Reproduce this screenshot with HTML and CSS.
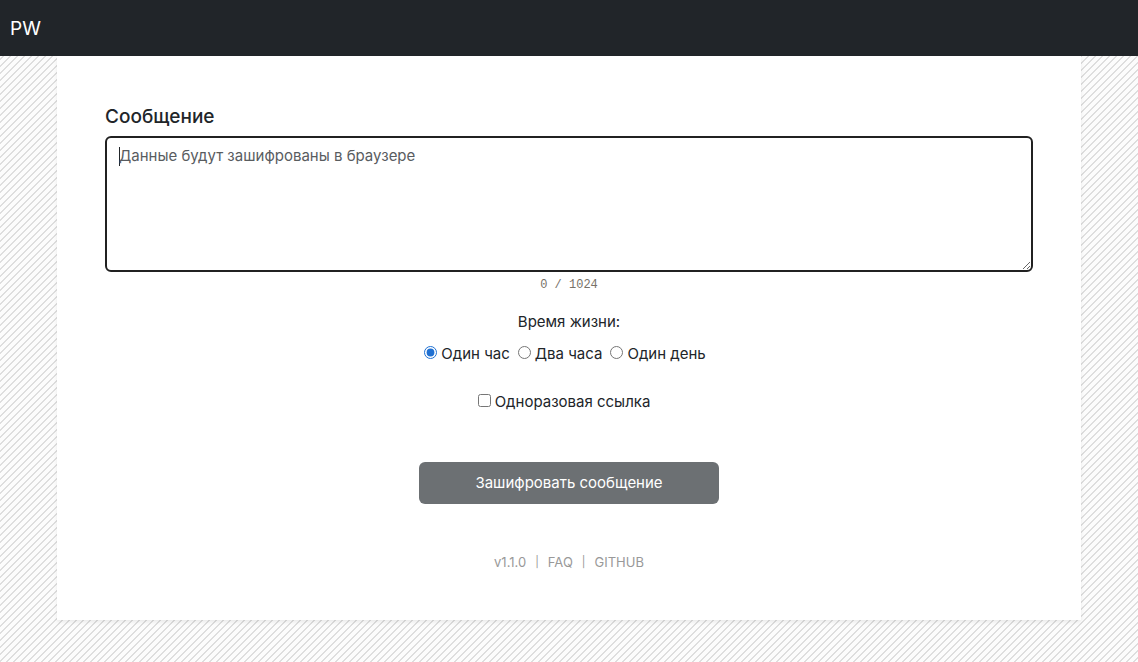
FILE: index.html
```html
<!DOCTYPE html>
<html lang="ru">
<head>
<meta charset="utf-8">
<meta name="viewport" content="width=device-width, initial-scale=1">
<title>PW</title>
<link rel="stylesheet" href="styles.css">
</head>
<body>
<nav class="navbar"><a class="brand" href="#">PW</a></nav>
<main class="card">
<form class="form">
<label class="title" for="message">Сообщение</label>
<textarea class="message" id="message" maxlength="1024" placeholder="Данные будут зашифрованы в браузере" autofocus></textarea>
<div class="counter">0 / 1024</div>
<fieldset class="lifetime">
<legend class="legend">Время жизни:</legend>
<div class="options">
<input class="radio" type="radio" name="ttl" id="hour" checked><label class="option" for="hour">Один час</label>
<input class="radio" type="radio" name="ttl" id="hours"><label class="option" for="hours">Два часа</label>
<input class="radio" type="radio" name="ttl" id="day"><label class="option" for="day">Один день</label>
</div>
</fieldset>
<div class="once"><input class="check" type="checkbox" id="once"><label for="once">Одноразовая ссылка</label></div>
<button class="submit" type="button">Зашифровать сообщение</button>
</form>
<footer class="footer"><span>v1.1.0</span><span class="divider">|</span><a class="link" href="#">FAQ</a><span class="divider">|</span><a class="link" href="#">GITHUB</a></footer>
</main>
</body>
</html>
```
FILE: styles.css
```css
* { box-sizing: border-box; }
body {
  margin: 0;
  min-height: 100vh;
  font: 15px/24px Inter, sans-serif;
  color: #212529;
  background: linear-gradient(135deg, #fcfcfc 15%, #dedede 15% 33%, #fcfcfc 33% 65%, #dedede 65% 83%, #fcfcfc 83%) 0 0 / 7px 7px;
}
.navbar {
  display: flex;
  align-items: center;
  height: 56px;
  padding: 2px 10px 0;
  background: #212529;
}
.brand { color: #fff; font-size: 19px; text-decoration: none; }
.card {
  max-width: 1024px;
  margin: 0 auto 42px;
  padding: 48px;
  background: #fff;
  box-shadow: 0 2px 4px rgba(0, 0, 0, .08);
}
.form { display: flex; flex-direction: column; align-items: center; }
.title {
  align-self: flex-start;
  margin-bottom: 6px;
  font-size: 19px;
  line-height: 26px;
  font-weight: 500;
}
.message {
  display: block;
  width: 100%;
  height: 136px;
  padding: 6px 12px;
  border: 2px solid #212121;
  border-radius: 6px;
  outline: 0;
  font: inherit;
  color: #212529;
  resize: vertical;
}
.message::placeholder { color: #595c5f; opacity: 1; }
.message:placeholder-shown {
  caret-color: transparent;
  background: linear-gradient(#212529, #212529) 12px 9px / 1px 19px no-repeat #fff;
}
.counter {
  margin-bottom: 12px;
  font: 12px/26px "Liberation Mono", monospace;
  color: #777168;
}
.lifetime { margin: 0 0 24px; padding: 0; border: 0; text-align: center; }
.legend { padding: 0; margin: 0 auto 8px; }
.options, .once { display: flex; align-items: center; }
.radio, .check { width: 13px; height: 13px; margin: 0 4px 3px 0; accent-color: #1f70d2; }
.option { margin-right: 8px; }
.once { margin-right: 10px; }
.submit {
  width: 300px;
  max-width: 100%;
  height: 42px;
  margin: 48px 0;
  border: 0;
  border-radius: 6px;
  font: inherit;
  color: #fff;
  background: #6c7073;
}
.footer {
  display: flex;
  justify-content: center;
  gap: 9px;
  font-size: 13px;
  line-height: 20px;
  color: #999;
}
.divider { font-size: 11px; }
.link { color: inherit; text-decoration: none; }
```
